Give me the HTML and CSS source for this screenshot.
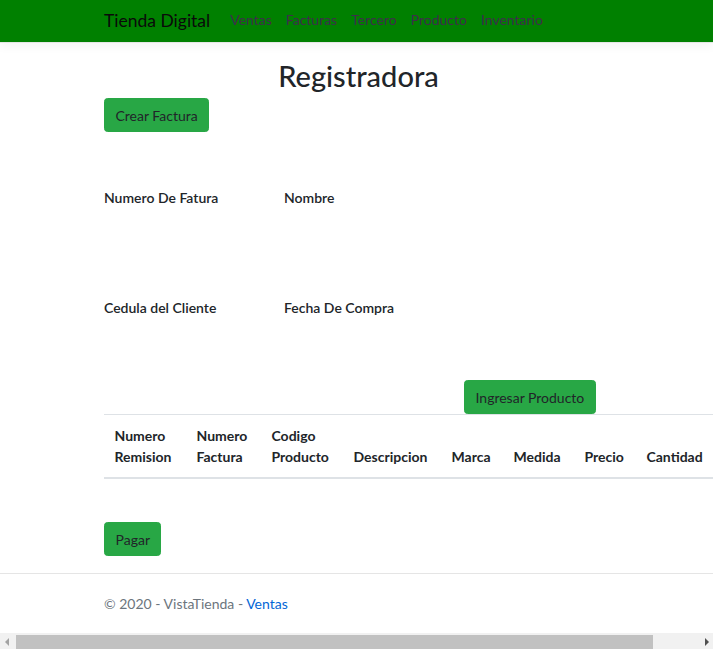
FILE: index.html
```html
<!DOCTYPE html>
<html lang="es">
<head>
<meta charset="utf-8">
<title>Registradora - VistaTienda</title>
<link rel="stylesheet" href="styles.css">
</head>
<body>
<header class="topbar">
  <nav class="navbar">
    <a class="brand" href="#">Tienda Digital</a>
    <ul class="nav-links">
      <li><a href="#">Ventas</a></li>
      <li><a href="#">Facturas</a></li>
      <li><a href="#">Tercero</a></li>
      <li><a href="#">Producto</a></li>
      <li><a href="#">Inventario</a></li>
    </ul>
  </nav>
</header>
<main class="container">
  <h1 class="title">Registradora</h1>
  <div class="action-row">
    <button class="btn" type="button">Crear Factura</button>
  </div>
  <div class="fields">
    <label class="field-label">Numero De Fatura</label>
    <label class="field-label">Nombre</label>
    <label class="field-label">Cedula del Cliente</label>
    <label class="field-label">Fecha De Compra</label>
  </div>
  <div class="add-row">
    <button class="btn" type="button">Ingresar Producto</button>
  </div>
  <table class="items">
    <colgroup>
      <col class="c1"><col class="c2"><col class="c3"><col class="c4"><col class="c5"><col class="c6"><col class="c7"><col class="c8">
    </colgroup>
    <thead>
      <tr>
        <th>Numero<br>Remision</th>
        <th>Numero<br>Factura</th>
        <th>Codigo<br>Producto</th>
        <th>Descripcion</th>
        <th>Marca</th>
        <th>Medida</th>
        <th>Precio</th>
        <th class="last">Cantidad</th>
      </tr>
    </thead>
    <tbody></tbody>
  </table>
  <div class="action-row">
    <button class="btn" type="button">Pagar</button>
  </div>
</main>
<footer class="footer">
  <div class="footer-inner">&copy; 2020 - VistaTienda - <a href="#">Ventas</a></div>
</footer>
<div class="hscroll" aria-hidden="true">
  <span class="sb-btn"><span class="sb-arrow-left"></span></span>
  <span class="sb-track"><span class="sb-thumb"></span></span>
  <span class="sb-btn"><span class="sb-arrow-right"></span></span>
</div>
</body>
</html>
```

FILE: styles.css
```css
html {
  height: 100%;
}

body {
  margin: 0;
  min-height: 100%;
  display: flex;
  flex-direction: column;
  overflow-x: hidden;
  font-family: Lato, "Open Sans", "DejaVu Sans", sans-serif;
  font-size: 14px;
  line-height: 21px;
  color: #212529;
  background: #fff;
}

/* Top bar */
.topbar {
  background: #008000;
  border-bottom: 1px solid #e5e5e5;
  box-shadow: 0 3px 10px rgba(0, 0, 0, 0.05);
}

.navbar {
  height: 42px;
  display: flex;
  align-items: center;
  padding-left: 104px;
  padding-bottom: 3px;
  box-sizing: border-box;
}

.brand {
  font-size: 17.5px;
  line-height: 27px;
  color: #0a0a0a;
  text-decoration: none;
  margin-right: 13px;
  margin-top: 1px;
}

.nav-links {
  list-style: none;
  margin: 0;
  padding: 0;
  display: flex;
}

.nav-links a {
  display: block;
  padding: 0 7px;
  color: #3f2e4c;
  text-decoration: none;
  font-size: 14px;
  line-height: 21px;
}

/* Main */
.container {
  flex: 1;
  width: 509px;
  margin-left: 104px;
  padding-top: 15px;
}

.title {
  margin: 0 0 5px;
  font-size: 29px;
  line-height: 35px;
  font-weight: 500;
  text-align: center;
  color: #212529;
}

.action-row {
  display: flex;
}

.btn {
  font-family: inherit;
  font-size: 14px;
  line-height: 21px;
  padding: 5.5px 10.5px;
  color: #212529;
  background: #28a745;
  border: 1px solid #28a745;
  border-radius: 3.5px;
  cursor: pointer;
}

.fields {
  display: grid;
  grid-template-columns: 180px 180px;
  grid-template-rows: 21px 21px;
  row-gap: 89px;
  margin-top: 55px;
}

.field-label {
  font-weight: 600;
}

.add-row {
  display: flex;
  padding-left: 360px;
  margin-top: 62px;
}

.items {
  border-collapse: collapse;
  table-layout: fixed;
  width: 609px;
  margin-bottom: 43px;
}

.items .c1 { width: 82px; }
.items .c2 { width: 75px; }
.items .c3 { width: 82px; }
.items .c4 { width: 98px; }
.items .c5 { width: 62px; }
.items .c6 { width: 71px; }
.items .c7 { width: 62px; }
.items .c8 { width: 77px; }

.items th {
  text-align: left;
  vertical-align: bottom;
  font-weight: 700;
  padding: 10px 10.5px;
  border-top: 1px solid #dee2e6;
  border-bottom: 2px solid #dee2e6;
  white-space: nowrap;
}

.items th.last {
  padding-right: 0;
}

/* Footer */
.footer {
  border-top: 1px solid #e5e5e5;
  color: #6c757d;
  line-height: 59px;
  white-space: nowrap;
}

.footer-inner {
  padding-left: 104px;
}

.footer a {
  color: #0366d6;
  text-decoration: none;
}

/* Horizontal scrollbar of the window */
.hscroll {
  height: 16px;
  display: flex;
  background: #f1f1f1;
  flex-shrink: 0;
}

.sb-btn {
  width: 16px;
  flex: 0 0 16px;
  display: flex;
  align-items: center;
  justify-content: center;
}

.sb-arrow-left {
  width: 0;
  height: 0;
  border-top: 4px solid transparent;
  border-bottom: 4px solid transparent;
  border-right: 4px solid #a3a3a3;
  margin-top: 2px;
  margin-left: -2px;
}

.sb-arrow-right {
  width: 0;
  height: 0;
  border-top: 4px solid transparent;
  border-bottom: 4px solid transparent;
  border-left: 4px solid #505050;
  margin-top: 2px;
  margin-left: 4px;
}

.sb-track {
  flex: 1;
  display: flex;
  padding-top: 2px;
}

.sb-thumb {
  width: 637px;
  background: #c1c1c1;
}
```
